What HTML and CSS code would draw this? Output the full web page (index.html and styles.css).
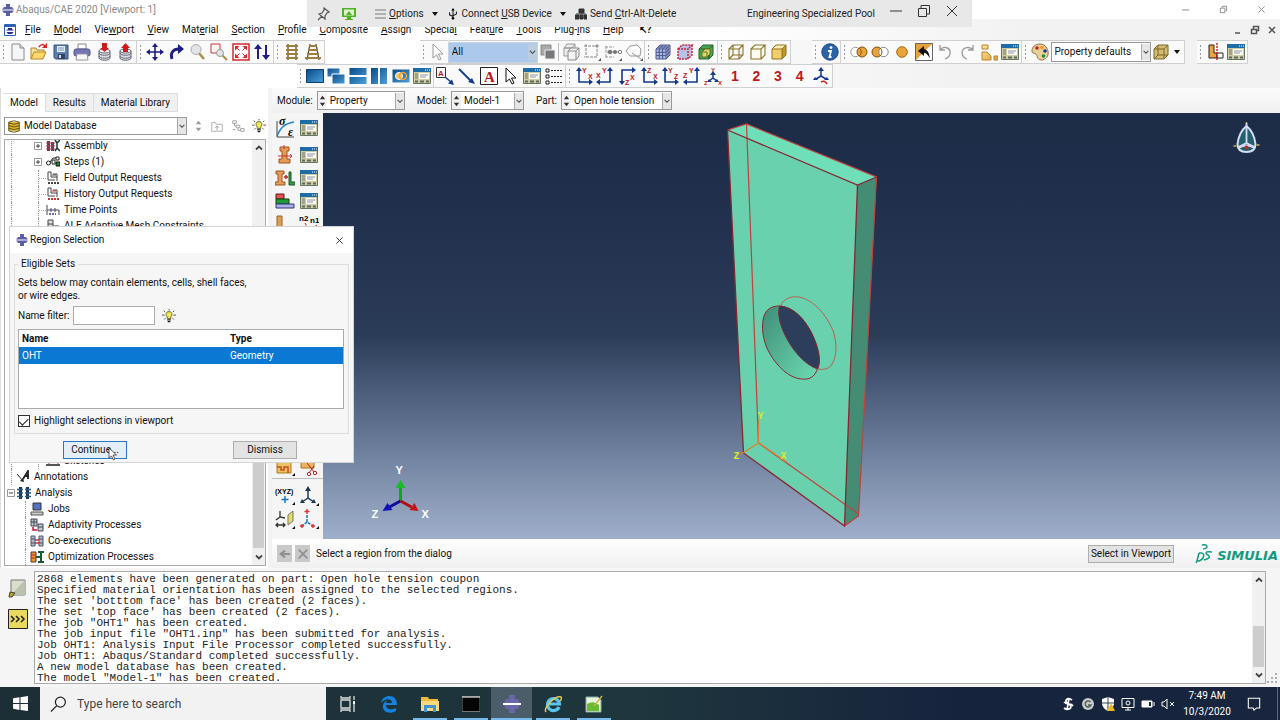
FILE: index.html
```html
<!DOCTYPE html>
<html lang="en">
<head>
<meta charset="utf-8">
<title>Abaqus/CAE 2020 [Viewport: 1]</title>
<link rel="stylesheet" href="styles.css">
</head>
<body>
<svg class="defs" aria-hidden="true">
  <defs>
    <linearGradient id="blueg" x1="0" y1="0" x2="1" y2="1"><stop offset="0" stop-color="#0b4a86"/><stop offset="1" stop-color="#4aa0dc"/></linearGradient>
    <linearGradient id="goldg" x1="0" y1="0" x2="1" y2="1"><stop offset="0" stop-color="#fde7a2"/><stop offset="1" stop-color="#dfa02c"/></linearGradient>
    <symbol id="app" viewBox="0 0 12 12"><path d="M4 0h4v3h2l2 2.400H0L2 3h2zM0 6.600h12L10 9H8v3H4V9H2z" fill="#5b5fa3"/></symbol>
    <symbol id="doc" viewBox="0 0 18 18"><path d="M3 1h8l4 4v12H3z" fill="#f6f6f8" stroke="#8a8a90"/><path d="M11 1v4h4" fill="#ddd" stroke="#8a8a90"/></symbol>
    <symbol id="open" viewBox="0 0 18 18"><path d="M1 16V5h5l1 2h7v3" fill="#f8e39c" stroke="#a9852d"/><path d="M1 16l3-7h12l-3 7z" fill="#ffd76a" stroke="#b98a24"/><path d="M9 4c2-3 4-3 6-1" fill="none" stroke="#d22" stroke-width="1.500"/><path d="M17 0v5h-5z" fill="#d22"/></symbol>
    <symbol id="save" viewBox="0 0 18 18"><path d="M2 2h14v14H3.500L2 14.500z" fill="#5c7fae" stroke="#33507c"/><path d="M5 3h8v6H5z" fill="#e8eef5"/><path d="M6 5h6M6 7h6" stroke="#7c95b8"/><path d="M6 11h7v5H6z" fill="#2e4360"/><path d="M7 12h2v3H7z" fill="#dde"/></symbol>
    <symbol id="print" viewBox="0 0 18 18"><path d="M5 1h8v5H5z" fill="#fff" stroke="#888"/><rect x="1" y="6" width="16" height="7" rx="2" fill="#7475b4" stroke="#55568f"/><path d="M4 11h10l1 6H3z" fill="#f8f8fb" stroke="#999"/></symbol>
    <symbol id="cyl" viewBox="0 0 18 18"><path d="M4 8v7c0 3 11 3 11 0V8z" fill="#d8dde0" stroke="#667"/><path d="M4 10c0 3 11 3 11 0M4 13c0 3 11 3 11 0" fill="none" stroke="#667"/><ellipse cx="9.500" cy="8" rx="5.500" ry="2" fill="#f3f5f6" stroke="#667"/></symbol>
    <symbol id="dbin" viewBox="0 0 18 18"><use href="#cyl"/><path d="M7 0h5v5h2l-4.500 4L5 5h2z" fill="#d3191d"/></symbol>
    <symbol id="dbout" viewBox="0 0 18 18"><use href="#cyl"/><path d="M7 9h5V5h2L9.500 0 5 5h2z" fill="#d3191d"/></symbol>
    <symbol id="move" viewBox="0 0 18 18"><path d="M9 2v14M2 9h14" stroke="#1d1d84" stroke-width="1.600"/><path d="M9 0l3 4H6zM9 18l3-4H6zM0 9l4-3v6zM18 9l-4-3v6z" fill="#1d1d84"/></symbol>
    <symbol id="rot" viewBox="0 0 18 18"><path d="M5 16C3 10 6 6 12 6" fill="none" stroke="#1d1d84" stroke-width="2.800"/><path d="M11 1l6 5-6 5z" fill="#1d1d84"/></symbol>
    <symbol id="mag" viewBox="0 0 18 18"><path d="M9 9l6 7" stroke="#aa8f45" stroke-width="2.500"/><circle cx="7" cy="6.500" r="5" fill="#e2e5e3" stroke="#aaa"/></symbol>
    <symbol id="magbox" viewBox="0 0 18 18"><path d="M1 1h9v9H1z" fill="#fff5f5" stroke="#c8393a"/><path d="M11 11l6 6" stroke="#aa8f45" stroke-width="2"/><circle cx="10" cy="10" r="3.500" fill="#e2e5e3" stroke="#999"/></symbol>
    <symbol id="fit" viewBox="0 0 18 18"><path d="M1 1h16v16H1z" fill="#fff" stroke="#d32b2b" stroke-width="1.500"/><path d="M3 3h4.500L3 7.500zM15 3v4.500L10.500 3zM3 15v-4.500L7.500 15zM15 15h-4.500l4.500-4.500z" fill="#d32b2b"/><path d="M4 4l3.500 3.500M14 4l-3.500 3.500M4 14l3.500-3.500M14 14l-3.500-3.500" stroke="#d32b2b"/></symbol>
    <symbol id="updn" viewBox="0 0 18 18"><path d="M5 4v12M13 2v12" stroke="#1d1d84" stroke-width="2"/><path d="M5 1l4 5H1zM13 17l4-5H9z" fill="#1d1d84"/></symbol>
    <symbol id="track" viewBox="0 0 18 18"><path d="M5 1v16M13 1v16" stroke="#5b4a2a" stroke-width="1.300"/><path d="M3 3h12M3 7h12M3 11h12M3 15h12" stroke="#9c7f3e" stroke-width="2"/></symbol>
    <symbol id="persp" viewBox="0 0 18 18"><path d="M6 1L3 17M12 1l3 16" stroke="#5b4a2a" stroke-width="1.300"/><path d="M5 3h8M4 7h10M3 11h12M1 15h16" stroke="#9c7f3e" stroke-width="2"/></symbol>
    <symbol id="arrow" viewBox="0 0 18 18"><path d="M5 1v14l3.500-3 2.500 5 2-1-2.500-5H15z" fill="#fff" stroke="currentColor"/></symbol>
    <symbol id="sqs" viewBox="0 0 18 18"><path d="M2 2h10v10H2z" fill="#aaa" stroke="#888"/><path d="M6 7h10v9H6z" fill="#77777c" stroke="#eee"/></symbol>
    <symbol id="wire" viewBox="0 0 18 18"><path d="M2 6h10v10H2zM2 6l4-4h10l-4 4M16 2v10l-4 4M6 2v10h10M2 16l4-4" fill="none" stroke="currentColor" stroke-width="1.100"/></symbol>
    <symbol id="wiredim" viewBox="0 0 18 18"><path d="M1 5l3-4h8l-3 4zM1 5h8v8H1zM12 1v8l-3 4" fill="#eee" stroke="#999"/><path d="M5 8l3-3h8v8l-3 4H5zM5 8h8v9M13 8l3-3" fill="#f3f3f3" stroke="#888"/></symbol>
    <symbol id="hid" viewBox="0 0 18 18"><path d="M2 6h10v10H2zM2 6l4-4h10l-4 4M16 2v10l-4 4" fill="#fffdf2" stroke="currentColor" stroke-width="1.100"/></symbol>
    <symbol id="solid" viewBox="0 0 18 18"><path d="M2 6h10v10H2z" fill="#f1cf68"/><path d="M2 6l4-4h10l-4 4z" fill="#ffeeb0"/><path d="M16 2v10l-4 4V6z" fill="#c3962d"/><path d="M2 6h10v10H2zM2 6l4-4h10l-4 4M16 2v10l-4 4" fill="none" stroke="#8d7327"/></symbol>
    <symbol id="mesh" viewBox="0 0 18 18"><path d="M2 6l4-4h10v10l-4 4H2z" fill="#aebbe2"/><path d="M2 6h10v10H2zM2 6l4-4h10l-4 4M16 2v10l-4 4M5.300 6v10M8.600 6v10M2 9.300h10l4-4M2 12.600h10l4-4M5.300 6l4-4M8.600 6l4-4M4 4h10v10" fill="none" stroke="#4b578b"/></symbol>
    <symbol id="seed" viewBox="0 0 18 18"><path d="M2 6l4-4h10v10l-4 4H2z" fill="#b9c0e6"/><path d="M2 6h10v10H2zM2 6l4-4h10l-4 4M16 2v10l-4 4" fill="none" stroke="#cf2539" stroke-width="1.500" stroke-dasharray="2 1"/></symbol>
    <symbol id="green" viewBox="0 0 18 18"><path d="M2 6h10v10H2zM2 6l4-4h10l-4 4M16 2v10l-4 4V6" fill="#4aa352" stroke="#26652b"/><path d="M5 9h5v5H5zM5 9l3-3h5v5l-3 3" fill="#d5da6a" stroke="#6b6f21"/></symbol>
    <symbol id="dashbox" viewBox="0 0 18 18"><path d="M3 1v13M1 3h13v11H1" fill="none" stroke="#888" stroke-dasharray="3 1"/><path d="M14 1v3M12 3h4" stroke="#888"/><path d="M15 18h3v-3z" fill="#555"/></symbol>
    <symbol id="nodes" viewBox="0 0 18 18"><path d="M2 3v12M1 4h9M1 14h9" stroke="#999" stroke-dasharray="3 1"/><path d="M3 9h14" stroke="#888"/><circle cx="6" cy="9" r="2.200" fill="#777"/><circle cx="11" cy="9" r="2" fill="#777"/><circle cx="16" cy="9" r="1.700" fill="#fff" stroke="#777"/><path d="M15 18h3v-3z" fill="#555"/></symbol>
    <symbol id="poly" viewBox="0 0 18 18"><path d="M1 8l4-5 7-1 4 4-1 7H5z" fill="none" stroke="#999"/><path d="M7 10l9 6" stroke="#999"/><path d="M15 18h3v-3z" fill="#555"/></symbol>
    <symbol id="info" viewBox="0 0 18 18"><circle cx="9" cy="9" r="8.200" fill="#2c62a6" stroke="#1b4780"/><circle cx="10" cy="4.600" r="1.400" fill="#fff"/><path d="M7 8h3l-1.500 6h2" fill="none" stroke="#fff" stroke-width="1.800"/></symbol>
    <symbol id="ovr" viewBox="0 0 18 18"><circle cx="5.500" cy="9" r="4.700" fill="#fff" stroke="#999"/><circle cx="12" cy="9" r="5" fill="#e8a33b" stroke="#80520c"/><path d="M9 5a4.700 4.700 0 0 1 0 8" fill="none" stroke="#80520c"/></symbol>
    <symbol id="ovl" viewBox="0 0 18 18"><circle cx="6" cy="9" r="5" fill="#e8a33b" stroke="#80520c"/><circle cx="12.500" cy="9" r="4.700" fill="#fff" stroke="#888"/><path d="M9 5a5 5 0 0 1 0 8" fill="none" stroke="#80520c"/></symbol>
    <symbol id="disc" viewBox="0 0 18 18"><circle cx="9" cy="9" r="5.300" fill="#e9a43c" stroke="#a36a11"/></symbol>
    <symbol id="hammer" viewBox="0 0 18 18"><path d="M0 0h18v18H0z" fill="#fff"/><path d="M0 0h18L0 18z" fill="#e5a13c"/><path d="M.5.500h17v17H.5z" fill="none" stroke="#666"/><path d="M3 8l6-5v3c4 1 5 4 6 9-3-4-4-5-6-5v3z" fill="#111"/></symbol>
    <symbol id="undo" viewBox="0 0 18 18"><path d="M4 2v5h5M4 7c3-4 9-3 10 1 1 4-2 7-5 8" fill="none" stroke="#9a9a9a" stroke-width="1.300"/></symbol>
    <symbol id="redo" viewBox="0 0 18 18"><path d="M15 2v5h-5M15 7C12 3 5 4 4 9c0 4 2 6 5 7" fill="none" stroke="#9a9a9a" stroke-width="1.300"/></symbol>
    <symbol id="assoc" viewBox="0 0 18 18"><path d="M2 2h6v4H2zM2 9h5l4 4v4H2zM14 13h4v4h-4z" fill="url(#goldg)" stroke="#b78432"/></symbol>
    <symbol id="form" viewBox="0 0 18 18"><path d="M.5 1.500h17v15H.5z" fill="#cfcda6" stroke="#66775f"/><path d="M0 1h18v4H0z" fill="#1d6ba7"/><path d="M12 3h1M14 3h1M16 3h1" stroke="#fff"/><path d="M6 6h10v6H6z" fill="#fdfdf5"/><path d="M7 8h8M7 10h6" stroke="#8b93a8"/><path d="M2 7h3M2 9h3M2 11h3" stroke="#777"/><path d="M2 14.500h3M7 14.500h4M13 14.500h3" stroke="#5f695a" stroke-width="2"/></symbol>
    <symbol id="palette" viewBox="0 0 18 18"><path d="M9 1C4 1 1 4 1 8c0 3 3 2 4 3 2 2 0 5 5 6 5 0 8-4 7-9-1-4-4-7-8-7z" fill="#e9cf98" stroke="#8d7142"/><circle cx="6" cy="5" r="1.800" fill="#c22"/><circle cx="11" cy="4.500" r="1.800" fill="#f29b2a"/><circle cx="14" cy="8" r="1.800" fill="#123a8e"/><circle cx="12.500" cy="13" r="1.800" fill="#1b8b35"/></symbol>
    <symbol id="cubeb" viewBox="0 0 18 18"><path d="M2 6l4-4h10v10l-4 4H2z" fill="#d2bb72"/><path d="M2 6h10v10H2zM2 6l4-4h10l-4 4M16 2v10l-4 4M6 2v10h10M2 16l4-4" fill="none" stroke="#7c6728"/></symbol>
    <symbol id="cut" viewBox="0 0 18 18"><path d="M3 2h5v8h3v5H3z" fill="#e7a63d" stroke="#222"/><path d="M11 10h6v5h-6z" fill="#fff" stroke="#222"/><path d="M11 0v18" stroke="#d22" stroke-width="1.500" stroke-dasharray="2 1"/></symbol>
    <symbol id="w1" viewBox="0 0 18 18"><path d="M.5 2.500h17v13H.5z" fill="url(#blueg)" stroke="#0c3f70"/></symbol>
    <symbol id="w2" viewBox="0 0 18 18"><path d="M0 1h13v9H0z" fill="url(#blueg)" stroke="#fff"/><path d="M5 7h13v10H5z" fill="url(#blueg)" stroke="#fff"/></symbol>
    <symbol id="w3" viewBox="0 0 18 18"><path d="M.5 1h17v7H.5zM.5 10h17v7H.5z" fill="url(#blueg)"/></symbol>
    <symbol id="w4" viewBox="0 0 18 18"><path d="M1 1h7v16H1zM10 1h7v16h-7z" fill="url(#blueg)"/></symbol>
    <symbol id="w5" viewBox="0 0 18 18"><path d="M.5 2.500h17v13H.5z" fill="url(#blueg)"/><circle cx="7" cy="9" r="3.500" fill="#f2c36a" stroke="#fff"/><circle cx="11" cy="9" r="3.500" fill="none" stroke="#f3a32b" stroke-width="1.500"/></symbol>
    <symbol id="acall" viewBox="0 0 18 18"><path d="M.5.500h9v10h-9z" fill="#fff" stroke="#333"/><text x="2" y="9" class="t8 red">A</text><path d="M9 10l6 5" stroke="#103a93" stroke-width="1.500"/><path d="M18 18l-6-1.500 4-4z" fill="#103a93"/></symbol>
    <symbol id="line" viewBox="0 0 18 18"><path d="M1 2l12 12" stroke="#103a93" stroke-width="1.800"/><path d="M17 17l-7-2 4-4z" fill="#103a93"/></symbol>
    <symbol id="abox" viewBox="0 0 18 18"><path d="M.5.500h17v17H.5z" fill="#fff" stroke="#222"/><text x="4" y="15" class="t15 red">A</text></symbol>
    <symbol id="list" viewBox="0 0 18 18"><path d="M1 2h3v3H1zM1 8h3v3H1zM1 14h3v3H1z" fill="none" stroke="#222"/><path d="M6 3.500h12M6 9.500h12M6 15.500h12" stroke="#222" stroke-dasharray="2 1"/></symbol>
    <symbol id="axr" viewBox="0 0 18 18"><path d="M4 3v12h11" fill="none" stroke="#12398f" stroke-width="1.600"/><path d="M4 0l3 4H1zM18 15l-4-3v6z" fill="#12398f"/></symbol>
    <symbol id="axl" viewBox="0 0 18 18"><path d="M14 3v12H3" fill="none" stroke="#12398f" stroke-width="1.600"/><path d="M14 0l3 4h-6zM0 15l4-3v6z" fill="#12398f"/></symbol>
    <symbol id="axd" viewBox="0 0 18 18"><path d="M4 14V3h11" fill="none" stroke="#12398f" stroke-width="1.600"/><path d="M4 18l3-4H1zM18 3l-4-3v6z" fill="#12398f"/></symbol>
    <symbol id="xy" viewBox="0 0 18 18"><use href="#axr"/><text x="7" y="6" class="t7 red">Y</text><text x="13" y="12" class="t7 red">X</text></symbol>
    <symbol id="yx" viewBox="0 0 18 18"><use href="#axl"/><text x="6" y="6" class="t7 red">Y</text><text x="0" y="11" class="t7 red">X</text></symbol>
    <symbol id="xz" viewBox="0 0 18 18"><use href="#axd"/><text x="12" y="13" class="t7 red">X</text><text x="7" y="18" class="t7 red">Z</text></symbol>
    <symbol id="zx" viewBox="0 0 18 18"><use href="#axr"/><text x="7" y="6" class="t7 red">Z</text><text x="13" y="12" class="t7 red">X</text></symbol>
    <symbol id="yz" viewBox="0 0 18 18"><use href="#axr"/><text x="7" y="6" class="t7 red">Y</text><text x="13" y="12" class="t7 red">Z</text></symbol>
    <symbol id="zy" viewBox="0 0 18 18"><use href="#axl"/><text x="6" y="6" class="t7 red">Y</text><text x="0" y="11" class="t7 red">Z</text></symbol>
    <symbol id="tri" viewBox="0 0 18 18"><path d="M9 6v5l4 3M9 11l-4 3" fill="none" stroke="#12398f" stroke-width="1.500"/><path d="M9 4l3 4H6zM15 15l-5 0 3-3zM3 15h5l-3-3z" fill="#12398f"/></symbol>
    <symbol id="iso" viewBox="0 0 18 18"><use href="#tri"/><text x="7" y="5" class="t6 red">Y</text><text x="14" y="18" class="t6 red">X</text><text x="0" y="18" class="t6 red">Z</text></symbol>
    <symbol id="csys" viewBox="0 0 18 18"><path d="M9 3v6l5 3M9 9l-5 3" fill="none" stroke="#12398f" stroke-width="1.500"/><path d="M9 0l3 4H6zM17 13l-5 0 3-3zM1 13h5l-3-3z" fill="#12398f"/><path d="M9 15q4-2 6 2" fill="none" stroke="#c22" stroke-width="1.500"/></symbol>
    <symbol id="chev" viewBox="0 0 10 10"><path d="M2 3.500l3 3 3-3" fill="none" stroke="#555" stroke-width="1.300"/></symbol>
    <symbol id="chevup" viewBox="0 0 10 10"><path d="M2 6.500l3-3 3 3" fill="none" stroke="#444" stroke-width="1.800"/></symbol>
    <symbol id="spin" viewBox="0 0 10 18"><path d="M5 3l3 4H2zM5 15l3-4H2z" fill="currentColor"/></symbol>
    <symbol id="bulb" viewBox="0 0 16 16"><path d="M8 3c-4 0-4 4-2 6v2h4V9c2-2 2-6-2-6z" fill="#ece95a" stroke="#5b5a20"/><path d="M6 12.500h4M6.500 14.500h3" stroke="#222" stroke-width="1.500"/><path d="M8 0v1.500M2 2l1.500 1.500M14 2l-1.500 1.500M0 7h3M13 7h3M2.500 12L4 10.500M13.500 12L12 10.500" stroke="#444"/></symbol>
    <symbol id="dbase" viewBox="0 0 16 14"><path d="M2 2h12v10H2z" fill="#e0b928"/><path d="M2 2q6-3 12 0M2 3q6 3 12 0M2 6q6 3 12 0M2 9q6 3 12 0M2 12q6 3 12 0M2 2v10M14 2v10" fill="none" stroke="#51420b"/></symbol>
    <symbol id="up" viewBox="0 0 16 16"><path d="M2 4h4l1 2h7v8H2z" fill="none" stroke="#aaa"/><path d="M8 13V8M6 10l2-2 2 2" fill="none" stroke="#999"/></symbol>
    <symbol id="links" viewBox="0 0 16 16"><path d="M2 2h4v3H2zM6 7h4v3H6zM11 11h4v3h-4zM4 5v3h2M8 10v3h3M2 12h3" fill="none" stroke="#999"/></symbol>
    <symbol id="plus" viewBox="0 0 8 8"><path d="M.5.500h7v7h-7z" fill="#fff" stroke="#999"/><path d="M2 4h4M4 2v4" stroke="#444"/></symbol>
    <symbol id="minus" viewBox="0 0 8 8"><path d="M.5.500h7v7h-7z" fill="#fff" stroke="#999"/><path d="M2 4h4" stroke="#444"/></symbol>
    <symbol id="asm" viewBox="0 0 14 14"><path d="M1 2h3v10H1zM5 3h3v9H5z" fill="#554454"/><path d="M0 4h9M0 7h9M0 10h9" stroke="#b33a55"/><path d="M9 1l2 3 3-3M11 4v6M9 12l2-3 3 3" fill="none" stroke="#173f2d" stroke-width="1.500"/></symbol>
    <symbol id="step" viewBox="0 0 14 14"><circle cx="2.500" cy="8" r="2" fill="none" stroke="#222"/><path d="M4 7l3-4h3" fill="none" stroke="#222"/><path d="M6 5h3v4H6zM10 2h3v3h-3z" fill="#fff" stroke="#222"/><path d="M10 7h4v4h-4z" fill="#1c8a2d" stroke="#111"/></symbol>
    <symbol id="outp" viewBox="0 0 14 14"><path d="M2 1h3v5h6V3H7M2 1v8M2 9h7M11 6v4" fill="none" stroke="#444"/><path d="M2 12h12" stroke="currentColor" stroke-width="2" stroke-dasharray="2 1"/><path d="M6 4h4" stroke="currentColor"/></symbol>
    <symbol id="time" viewBox="0 0 14 14"><path d="M1 2v10M1 7h12M5 5v4M9 5v4M13 7v5" fill="none" stroke="#446"/><path d="M3 11h7" stroke="#66b" stroke-width="2" stroke-dasharray="2 1"/></symbol>
    <symbol id="ale" viewBox="0 0 14 14"><path d="M2 1h5v11H2zM2 5h5M2 9h5M7 7h6v5H7M10 7v5" fill="#ddd" stroke="#444"/></symbol>
    <symbol id="sk" viewBox="0 0 14 14"><path d="M3 3h9v8H3z" fill="#fff" stroke="#b33"/><path d="M0 11h14" stroke="#555" stroke-width="2"/></symbol>
    <symbol id="ann" viewBox="0 0 14 14"><path d="M1 4l6 7" stroke="#222"/><path d="M8 12l-4-1 3-3z" fill="#222"/><path d="M7 9l5-8v8M9 6h4" fill="none" stroke="#222" stroke-width="1.800"/></symbol>
    <symbol id="ana" viewBox="0 0 14 14"><path d="M2 1h3v12H2zM9 1h3v12H9z" fill="#1a3556"/><path d="M0 3.500h6M0 7h6M0 10.500h6M8 3.500h6M8 7h6M8 10.500h6" stroke="#2b5a80" stroke-width="1.500"/></symbol>
    <symbol id="job" viewBox="0 0 14 14"><path d="M3 1h8v7H3z" fill="#5173c4" stroke="#333"/><path d="M1 10h12v3H1z" fill="#ccc" stroke="#555"/></symbol>
    <symbol id="adp" viewBox="0 0 14 14"><path d="M1 1h6v7H1zM1 4h6M4 1v7M8 6h5v7H8zM8 9h5" fill="#bcc" stroke="#445"/><path d="M3 9v3h4" fill="none" stroke="#c13" stroke-width="1.500"/></symbol>
    <symbol id="coex" viewBox="0 0 14 14"><path d="M1 2h4v10H1zM9 2h4v10H9zM1 5h4M1 9h4M9 5h4M9 9h4" fill="#abc" stroke="#556"/><path d="M5 6h4M5 9h4" stroke="#c33" stroke-width="1.500"/></symbol>
    <symbol id="opt" viewBox="0 0 14 14"><path d="M1 2h5v10H1z" fill="#e29b2e" stroke="#634"/><path d="M1 5h5M1 8h5" stroke="#c22"/><path d="M8 2h6M8 12h6M11 2v10M6 7h5" stroke="#175c36" stroke-width="2"/></symbol>
    <symbol id="sig" viewBox="0 0 20 20"><path d="M2 3v16h17" fill="none" stroke="#444"/><path d="M2 18C6 9 9 6 19 4" fill="none" stroke="#2882c6" stroke-width="1.500"/><text x="4" y="7" class="t12">σ</text><text x="13" y="18" class="t12">ε</text></symbol>
    <symbol id="sec" viewBox="0 0 20 20"><path d="M5 2h9v4h-2v8h3v4H4v-4h3V6H5z" fill="#e49b57" stroke="#9c5420"/><path d="M3 11h14M15 9l2 2-2 2M9 0v4" fill="none" stroke="#c33"/></symbol>
    <symbol id="secl" viewBox="0 0 20 20"><path d="M1 3h8v3H7v8h3v3H0v-3h3V6H1z" fill="#e49b57" stroke="#9c5420"/><path d="M9 9h4M11 7v4" stroke="#c22" stroke-width="1.500"/><path d="M14 4h2v10h4v3h-6z" fill="#3d9a48" stroke="#1d5a25"/></symbol>
    <symbol id="lay" viewBox="0 0 20 20"><path d="M1 3h8v5H1z" fill="#e05555" stroke="#611"/><path d="M1 8h13v5H1z" fill="#1e9b34" stroke="#141"/><path d="M1 13h18v4H1z" fill="#aab0ea" stroke="#337"/></symbol>
    <symbol id="beam" viewBox="0 0 20 20"><path d="M2 2h5v17H2z" fill="#dca055" stroke="#96602b"/></symbol>
    <symbol id="nn" viewBox="0 0 20 20"><text x="0" y="7" class="t8">n2</text><text x="11" y="9" class="t8">n1</text><path d="M6 9l4 8 8-6" fill="none" stroke="#c22" stroke-dasharray="3 1"/></symbol>
    <symbol id="part1" viewBox="0 0 20 20"><path d="M2 4h14v12H2z" fill="#ecc45f" stroke="#a77a24"/><path d="M2 10h4v3h3v-3h4v6" fill="none" stroke="#c74b22" stroke-width="1.500"/><path d="M17 19h3v-3z"/></symbol>
    <symbol id="part2" viewBox="0 0 20 20"><path d="M2 4h13v7H2z" fill="#ecb35f" stroke="#a77a24"/><path d="M8 6l7 9M15 9l-5 7" stroke="#b22"/><circle cx="16" cy="16" r="1.700" fill="#fff" stroke="#b22"/><circle cx="10" cy="17" r="1.700" fill="#fff" stroke="#b22"/></symbol>
    <symbol id="xyz" viewBox="0 0 20 20"><text x="0" y="8" class="t7">(XYZ)</text><path d="M10 10v7M6.500 13.500h7" stroke="#1673c2" stroke-width="1.400"/><path d="M17 19h3v-3z"/></symbol>
    <symbol id="daxis" viewBox="0 0 20 20"><path d="M9 3v9l6 4M9 12l-6 4" fill="none" stroke="#1c3d52" stroke-width="1.500"/><path d="M9 0l3 5H6zM17 17l-5 0 3-4zM1 17h5l-3-4z" fill="#1c3d52"/><path d="M17 20h3v-3z"/></symbol>
    <symbol id="dpl" viewBox="0 0 20 20"><path d="M5 2v6l5 1M5 8l-4 3M1 16h9M3 14l-2 2 2 2M8 14l2 2-2 2" fill="none" stroke="#333" stroke-width="1.300"/><path d="M13 6l5-4v10l-5 4z" fill="#e8db6b" stroke="#776"/><path d="M17 20h3v-3z"/></symbol>
    <symbol id="dcs" viewBox="0 0 20 20"><path d="M8 6v7l6 4M8 13l-5 4" fill="none" stroke="#1673c2" stroke-width="1.500" stroke-dasharray="3 1"/><path d="M8 0v5M5.500 2.500h5M3 15v4M1 17h4M14 15v4M12 17h4" stroke="#d33" stroke-width="1.400"/><path d="M17 20h3v-3z"/></symbol>
  </defs>
</svg>

<div class="desktop">
  <header class="title">
    <svg class="s12"><use href="#app"/></svg><span class="title-text">Abaqus/CAE 2020 [Viewport: 1]</span>
    <div class="winbtns">
      <button aria-label="Minimize"><svg viewBox="0 0 10 10"><path d="M1 5.500h8"/></svg></button>
      <button aria-label="Restore"><svg viewBox="0 0 10 10"><path d="M1.500 3.500h5v5h-5zM3.500 3V1.500h5v5H7"/></svg></button>
      <button aria-label="Close"><svg viewBox="0 0 10 10"><path d="M1.500 1.500l7 7M8.500 1.500l-7 7"/></svg></button>
    </div>
  </header>

  <nav class="menu">
    <svg class="s12 menulogo" viewBox="0 0 12 12"><path d="M.5.500h11v11H.5z" fill="#fff" stroke="#2b62b5"/><path d="M1 1h10v2H1z" fill="#2b62b5"/><path d="M4 4h4v1.500h1.500v1h-7v-1H4zM2.500 8h7L8 10H4z" fill="#2a2c8c"/></svg>
    <button><u>F</u>ile</button><button><u>M</u>odel</button><button>Vie<u>w</u>port</button><button><u>V</u>iew</button><button>Mat<u>e</u>rial</button><button><u>S</u>ection</button><button><u>P</u>rofile</button><button><u>C</u>omposite</button><button><u>A</u>ssign</button><button>Specia<u>l</u></button><button>Feat<u>u</u>re</button><button><u>T</u>ools</button><button>Plug-<u>i</u>ns</button><button><u>H</u>elp</button><button class="ctxhelp" aria-label="Context help">↖?</button>
    <div class="mdibtns">
      <button aria-label="Minimize viewport"><svg viewBox="0 0 10 10"><path d="M2 8h5"/></svg></button>
      <button aria-label="Restore viewport"><svg viewBox="0 0 10 10"><path d="M1.500 4.500h5v4h-5zM3.500 4V1.500h5v4H7"/></svg></button>
      <button aria-label="Close viewport"><svg viewBox="0 0 10 10"><path d="M2 2l6 6M8 2l-6 6"/></svg></button>
    </div>
  </nav>

  <div class="bar">
    <div class="grp g137"><i class="grip"></i><button aria-label="New"><svg><use href="#doc"/></svg></button><button aria-label="Open"><svg><use href="#open"/></svg></button><button aria-label="Save"><svg><use href="#save"/></svg></button><button aria-label="Print"><svg><use href="#print"/></svg></button><button aria-label="Check in"><svg><use href="#dbin"/></svg></button><button aria-label="Check out"><svg><use href="#dbout"/></svg></button></div>
    <div class="grp g137"><i class="grip"></i><button aria-label="Pan"><svg><use href="#move"/></svg></button><button aria-label="Rotate"><svg><use href="#rot"/></svg></button><button aria-label="Magnify"><svg><use href="#mag"/></svg></button><button aria-label="Box zoom"><svg><use href="#magbox"/></svg></button><button aria-label="Fit view"><svg><use href="#fit"/></svg></button><button aria-label="Cycle views"><svg><use href="#updn"/></svg></button></div>
    <div class="grp g51"><i class="grip"></i><button aria-label="Parallel"><svg><use href="#track"/></svg></button><button aria-label="Perspective"><svg><use href="#persp"/></svg></button></div>
    <div class="grp far-a"><i class="grip"></i><button class="dim" aria-label="Select"><svg><use href="#arrow"/></svg></button><span class="combo all"><select aria-label="Selection filter"><option>All</option></select><svg class="drop"><use href="#chev"/></svg></span><button aria-label="Inside"><svg><use href="#sqs"/></svg></button><i class="sep"></i><button aria-label="Exterior"><svg><use href="#wiredim"/></svg></button><button aria-label="Drag shape"><svg><use href="#dashbox"/></svg></button><button aria-label="Nodes"><svg><use href="#nodes"/></svg></button><button aria-label="Polygon"><svg><use href="#poly"/></svg></button></div>
    <div class="grp g73"><i class="grip"></i><button aria-label="Mesh"><svg><use href="#mesh"/></svg></button><button aria-label="Seeds"><svg><use href="#seed"/></svg></button><button aria-label="Reference"><svg><use href="#green"/></svg></button></div>
    <div class="grp g73"><i class="grip"></i><button class="gold" aria-label="Wireframe"><svg><use href="#wire"/></svg></button><button class="gold" aria-label="Hidden"><svg><use href="#hid"/></svg></button><button aria-label="Shaded"><svg><use href="#solid"/></svg></button></div>
    <div class="grp far-b"><i class="grip"></i><button aria-label="Query"><svg><use href="#info"/></svg></button></div>
    <div class="grp g181"><i class="grip"></i><button aria-label="Replace"><svg><use href="#ovr"/></svg></button><button aria-label="Remove"><svg><use href="#ovl"/></svg></button><button aria-label="Display all"><svg><use href="#disc"/></svg></button><button aria-label="Active"><svg><use href="#hammer"/></svg></button><button aria-label="Undo"><svg><use href="#undo"/></svg></button><button aria-label="Redo"><svg><use href="#redo"/></svg></button><button aria-label="Groups"><svg><use href="#assoc"/></svg></button><button aria-label="Group manager"><svg><use href="#form"/></svg></button></div>
    <div class="grp g163"><i class="grip"></i><button aria-label="Colors"><svg><use href="#palette"/></svg></button><span class="combo defaults"><select aria-label="Color mapping"><option>Property defaults</option></select><svg class="drop"><use href="#chev"/></svg></span><button aria-label="Translucency"><svg><use href="#cubeb"/></svg></button><i class="tri"></i></div>
    <div class="grp far-c"><i class="grip"></i><button aria-label="View cut"><svg><use href="#cut"/></svg></button><button aria-label="View cut manager"><svg><use href="#form"/></svg></button></div>
  </div>

  <div class="bar second">
    <div class="grp g137"><i class="grip"></i><button aria-label="New viewport"><svg><use href="#w1"/></svg></button><button aria-label="Cascade"><svg><use href="#w2"/></svg></button><button aria-label="Tile rows"><svg><use href="#w3"/></svg></button><button aria-label="Tile columns"><svg><use href="#w4"/></svg></button><button aria-label="Link"><svg><use href="#w5"/></svg></button><button aria-label="Link options"><svg><use href="#form"/></svg></button></div>
    <div class="grp g132"><button aria-label="Callout"><svg><use href="#acall"/></svg></button><button aria-label="Arrow"><svg><use href="#line"/></svg></button><button aria-label="Text"><svg><use href="#abox"/></svg></button><button aria-label="Edit"><svg><use href="#arrow"/></svg></button><button aria-label="Manager"><svg><use href="#form"/></svg></button><button aria-label="Legend"><svg><use href="#list"/></svg></button></div>
    <div class="grp g267"><i class="grip"></i><button aria-label="XY"><svg><use href="#xy"/></svg></button><button aria-label="YX"><svg><use href="#yx"/></svg></button><button aria-label="XZ"><svg><use href="#xz"/></svg></button><button aria-label="ZX"><svg><use href="#zx"/></svg></button><button aria-label="YZ"><svg><use href="#yz"/></svg></button><button aria-label="ZY"><svg><use href="#zy"/></svg></button><button aria-label="Isometric"><svg><use href="#iso"/></svg></button><button class="num">1</button><button class="num">2</button><button class="num">3</button><button class="num">4</button><button aria-label="Specify"><svg><use href="#csys"/></svg></button></div>
  </div>

  <main class="work">
    <aside class="side">
      <div class="tabs"><button class="on">Model</button><button>Results</button><button>Material Library</button></div>
      <div class="dbrow">
        <span class="combo db"><svg class="dbi"><use href="#dbase"/></svg><select aria-label="Database"><option>Model Database</option></select><svg class="drop"><use href="#chev"/></svg></span>
        <svg class="spn grey"><use href="#spin"/></svg><svg class="s16"><use href="#up"/></svg><svg class="s16"><use href="#links"/></svg><svg class="s16"><use href="#bulb"/></svg>
      </div>
      <div class="treebox">
        <div class="tree">
          <ul class="upper">
            <li><i class="v a"></i><svg class="ex"><use href="#plus"/></svg><svg class="ti"><use href="#asm"/></svg>Assembly</li>
            <li><i class="v a"></i><svg class="ex"><use href="#plus"/></svg><svg class="ti"><use href="#step"/></svg>Steps (1)</li>
            <li><i class="v a"></i><i class="tee"></i><svg class="ti blk"><use href="#outp"/></svg>Field Output Requests</li>
            <li><i class="v a"></i><i class="tee"></i><svg class="ti redi"><use href="#outp"/></svg>History Output Requests</li>
            <li><i class="v a"></i><i class="tee"></i><svg class="ti"><use href="#time"/></svg>Time Points</li>
            <li><i class="v a"></i><i class="tee"></i><svg class="ti"><use href="#ale"/></svg>ALE Adaptive Mesh Constraints</li>
          </ul>
          <ul>
            <li><i class="v a"></i><i class="tee"></i><svg class="ti"><use href="#sk"/></svg>Sketches</li>
            <li><i class="v c"></i><svg class="ti"><use href="#ann"/></svg>Annotations</li>
            <li><svg class="ex r"><use href="#minus"/></svg><svg class="ti"><use href="#ana"/></svg>Analysis</li>
            <li><i class="v b"></i><svg class="ti"><use href="#job"/></svg>Jobs</li>
            <li><i class="v b"></i><svg class="ti"><use href="#adp"/></svg>Adaptivity Processes</li>
            <li><i class="v b"></i><svg class="ti"><use href="#coex"/></svg>Co-executions</li>
            <li><i class="v b"></i><svg class="ti"><use href="#opt"/></svg>Optimization Processes</li>
          </ul>
        </div>
        <div class="scroll"><svg><use href="#chevup"/></svg><i class="thumb"></i><svg class="flip"><use href="#chevup"/></svg></div>
      </div>
    </aside>

    <section class="right">
      <div class="context">
        <label for="module">Module:</label><span class="combo m1"><svg class="spn"><use href="#spin"/></svg><select id="module"><option>Property</option></select><svg class="drop"><use href="#chev"/></svg></span>
        <label for="modelsel">Model:</label><span class="combo m2"><svg class="spn"><use href="#spin"/></svg><select id="modelsel"><option>Model-1</option></select><svg class="drop"><use href="#chev"/></svg></span>
        <label for="partsel">Part:</label><span class="combo m3"><svg class="spn"><use href="#spin"/></svg><select id="partsel"><option>Open hole tension</option></select><svg class="drop"><use href="#chev"/></svg></span>
      </div>
      <div class="canvasrow">
        <div class="toolbox">
          <div class="tools top"><svg><use href="#sig"/></svg><svg class="f"><use href="#form"/></svg><svg><use href="#sec"/></svg><svg class="f"><use href="#form"/></svg><svg><use href="#secl"/></svg><svg class="f"><use href="#form"/></svg><svg><use href="#lay"/></svg><svg class="f"><use href="#form"/></svg><svg><use href="#beam"/></svg><svg><use href="#nn"/></svg></div>
          <div>
            <div class="tools low"><svg><use href="#part1"/></svg><svg><use href="#part2"/></svg></div>
            <div class="tools datum"><svg><use href="#xyz"/></svg><svg><use href="#daxis"/></svg><svg><use href="#dpl"/></svg><svg><use href="#dcs"/></svg></div>
          </div>
        </div>
        <div class="viewport">
          <svg viewBox="323 113 956 426" role="img" aria-label="Open hole tension part">
            <defs><linearGradient id="hole" x1="0" y1="0" x2="1" y2="1"><stop offset="0" stop-color="#3f8d76"/><stop offset="1" stop-color="#6ddcb4"/></linearGradient></defs>
            <path d="M727 130L746 124 876 177 858 516 844 526 743 453z" fill="#6ad1ae"/>
            <path d="M727 130L746 124 876 177 857 185z" fill="#6edfb8"/>
            <path d="M857 185L876 177 858 516 844 526z" fill="#458c75"/>
            <path d="M763 318C765 309 771 306 779 306C793 307 804 319 811 333C818 347 821 361 817 369C814 377 809 380 801 379C787 378 773 363 766 347C762 336 761 327 763 318z" fill="url(#hole)" stroke="#8c2432"/>
            <path d="M779 306C793 307 804 319 811 333C818 347 821 361 817 369C803 364 791 349 784 334C779 323 777 314 779 306z" fill="#2c3e5c" stroke="#7c2836"/>
            <path d="M780 306C783 299 789 296 798 297C812 299 826 314 833 332C837 346 836 357 831 365C828 369 823 370 817 369" fill="none" stroke="#b8604f"/>
            <path d="M746 124L758 443 858 514M727 130L746 124 876 177 858 516 844 526" fill="none" stroke="#c33f3d" stroke-width="1.200"/>
            <path d="M727 130L857 185 876 177M857 185L844 526 743 453 727 130" fill="none" stroke="#8a2433" stroke-width="1.300"/>
            <path d="M758 419v24M758 443l-19 12M758 443l28 19" fill="none" stroke="#e27b29" stroke-width="1.200"/>
            <g class="datumtxt"><text x="757" y="419">Y</text><text x="733" y="459">Z</text><text x="780" y="459">X</text></g>
            <path d="M400 501V484" stroke="#11a621" stroke-width="3"/><path d="M400 480l5 8h-10z" fill="#18bb28"/>
            <path d="M400 501l-11 6" stroke="#0c0c9c" stroke-width="3"/><path d="M382 511l5-8 5 7z" fill="#1212b4"/>
            <path d="M400 501l11 6" stroke="#b01010" stroke-width="3"/><path d="M418 511l-9-1 5-7z" fill="#c41414"/>
            <g class="triadtxt"><text x="395" y="474">Y</text><text x="371" y="518">Z</text><text x="421" y="518">X</text></g>
            <path d="M1246 126c-5 4-8 10-9 18q0 8 9 8t9-8c-1-8-4-14-9-18z" fill="#23606d" stroke="#d7dcf5" stroke-width="2"/><path d="M1246 123v20l-8 4M1246 143l8 4M1238 148q8-5 16 0" fill="none" stroke="#d7dcf5" stroke-width="1.800"/><circle cx="1246" cy="147.500" r="2" fill="#c22"/><path d="M1233 146h3M1256 145h3M1246 122v1" stroke="#c5b945" stroke-width="1.500"/>
          </svg>
        </div>
      </div>
      <div class="prompt">
        <button class="pbtn" aria-label="Back"><svg viewBox="0 0 14 14"><path d="M13 7H4M7 3L2 7l5 4" stroke-width="2.500"/></svg></button><button class="pbtn" aria-label="Cancel"><svg viewBox="0 0 14 14"><path d="M2 2l10 10M12 2L2 12" stroke-width="2"/></svg></button>
        <span>Select a region from the dialog</span>
        <button class="btn selvp">Select in Viewport</button>
        <svg class="ds" viewBox="0 0 18 20" aria-hidden="true"><path d="M7 1q5-1 5 2-1 2-4 2M4 9h2q4 0 2 5-2 3-6 3l2-8M1 19l1-2M17 8q-6-1-6 1 0 1 2 2 4 3-4 5" fill="none" stroke="#149a82" stroke-width="1.500"/></svg>
        <span class="simulia">SIMULIA</span>
      </div>
    </section>
  </main>

  <section class="messages">
    <div class="mtabs"><button aria-label="Message area"><svg viewBox="0 0 20 20"><path d="M3 1h14v15H3z" fill="#d9dfcb" stroke="#777"/><path d="M3 16L17 1v15z" fill="#b9c2ad"/><path d="M1 18l1-5 5 1-3 4z" fill="#b5a32b" stroke="#443"/></svg></button><button class="pressed" aria-label="Command line"><svg viewBox="0 0 20 20"><path d="M.5.500h19v19H.5z" fill="#e9d95e" stroke="#222"/><path d="M3 7l3 3-3 3M8 7l3 3-3 3M13 7l3 3-3 3" fill="none" stroke="#222" stroke-width="1.500"/></svg></button></div>
    <div class="log">
      <pre>2868 elements have been generated on part: Open hole tension coupon
Specified material orientation has been assigned to the selected regions.
The set 'botttom face' has been created (2 faces).
The set 'top face' has been created (2 faces).
The job "OHT1" has been created.
The job input file "OHT1.inp" has been submitted for analysis.
Job OHT1: Analysis Input File Processor completed successfully.
Job OHT1: Abaqus/Standard completed successfully.
A new model database has been created.
The model "Model-1" has been created.</pre>
      <div class="scroll"><svg><use href="#chevup"/></svg><i class="thumb small"></i><svg class="flip"><use href="#chevup"/></svg></div>
    </div>
    <svg class="resize" viewBox="0 0 12 12"><path d="M8 2h2M4 6h2M8 6h2M0 10h2M4 10h2M8 10h2" stroke="#999" stroke-width="1.500"/></svg>
  </section>

  <footer class="taskbar">
    <button class="start" aria-label="Start"><svg viewBox="0 0 16 16"><path d="M1 3l6-1v5.500H1zM8 2l7-1v6.500H8zM1 8.500h6V14l-6-1zM8 8.500h7V15l-7-1z" fill="#fff"/></svg></button>
    <label class="search"><svg viewBox="0 0 18 18"><circle cx="11" cy="7" r="5.300"/><path d="M7 11l-6 6"/></svg><input type="text" placeholder="Type here to search" aria-label="Search"></label>
    <div class="apps">
      <button aria-label="Task View"><svg viewBox="0 0 18 18"><path d="M2 5h9v8H2zM2 1v2h9V1M2 17v-2h9v2M15 1v4M15 9v8" fill="none" stroke="#ddd" stroke-width="1.300"/><path d="M14 6h2v3h-2z" fill="#fff"/></svg></button>
      <button aria-label="Edge"><svg viewBox="0 0 18 18"><path d="M1 8C2 3 6 1 9 1c5 0 8 3 8 9H6c0 5 6 5 10 3v3C9 20 2 17 3 10c1-3 3-4 5-5-2 1-2 3-2 3h6C12 3 5 3 1 8z" fill="#1583dc"/></svg></button>
      <button class="run" aria-label="File Explorer"><svg viewBox="0 0 18 18"><path d="M0 2h7l1 2h9v12H0z" fill="#f0b93a"/><path d="M0 6h18v10H0z" fill="#fbd97a"/><path d="M3 10h12v7h-3v-4H6v4H3z" fill="#3f94d2"/></svg></button>
      <button class="run" aria-label="Command Prompt"><svg viewBox="0 0 18 18"><path d="M0 1.500h18v15H0z" fill="#050505" stroke="#777"/><path d="M0 2h18" stroke="#bbb" stroke-width="1.500"/></svg></button>
      <button class="run active" aria-label="Abaqus"><svg viewBox="0 0 18 18"><path d="M6 0h6v4h3l2 4H1l2-4h3zM1 10h16l-2 4h-3v4H6v-4H3z" fill="#6a66aa"/><path d="M0 9h18" stroke="#fff" stroke-width="2"/></svg></button>
      <button class="run" aria-label="Internet Explorer"><svg viewBox="0 0 18 18"><path d="M15 12a6 6 0 1 1 .5-3H5" fill="none" stroke="#59c4ee" stroke-width="3.200"/><path d="M2 17C-1 13 11 0 17 2c1 1 0 3-1 4" fill="none" stroke="#e9c94b" stroke-width="1.500"/></svg></button>
      <button class="run" aria-label="Notepad++"><svg viewBox="0 0 18 18"><path d="M1 2h12l3 3v12H1z" fill="#e9f4dc" stroke="#8a9"/><path d="M2 9q6-4 12 1v6H2z" fill="#67bb35"/><path d="M9 11l8-10" stroke="#d5b03c" stroke-width="1.500"/></svg></button>
    </div>
    <div class="tray">
      <svg viewBox="0 0 14 14"><path d="M11 3C7 0 3 3 6 6l3 2c3 3-2 6-6 3M3 5c4 4 7 0 9 4M8 1L6 13" fill="none" stroke="#fff" stroke-width="1.700"/></svg>
      <svg viewBox="0 0 14 14"><circle cx="7" cy="7" r="6" fill="#c8cbc8"/><path d="M9.500 5a3 3 0 1 0 .5 3H7" fill="none" stroke="#566" stroke-width="1.500"/></svg>
      <svg viewBox="0 0 14 14"><path d="M7 0l6 2v5q-1 5-6 7-5-2-6-7V2z" fill="#fff"/><path d="M7 0v14M1 6h12" stroke="#345"/><path d="M10 6l4 8H6z" fill="#f4b719"/></svg>
      <svg viewBox="0 0 14 14"><path d="M1 1.500h12v9H1zM7 11v2M4 13h6" fill="none" stroke="#fff"/><circle cx="7" cy="6" r="2" fill="none" stroke="#fff"/></svg>
      <svg viewBox="0 0 14 14"><path d="M1 4h10v6H1z" fill="#fff" stroke="#fff"/><path d="M8 5h2v4H8z" fill="#1a2a3c"/><path d="M13 5v4" stroke="#fff"/></svg>
      <svg viewBox="0 0 14 14"><path d="M1 5h2l3-3v10L3 9H1zM9 5l4 4M13 5L9 9" fill="none" stroke="#fff"/></svg>
      <div class="clock"><span>7:49 AM</span><span>10/3/2020</span></div>
      <button class="note" aria-label="Notifications"><svg viewBox="0 0 16 16"><path d="M1.500 1.500h13v11H11L8 15l-1-2.500H1.500z" fill="none" stroke="#fff" stroke-width="1.200"/></svg></button>
    </div>
  </footer>
</div>

<div class="vmbar">
  <svg class="s14" viewBox="0 0 14 14"><path d="M8 1l5 4-2 1-2 3v3L3 7l3-1 2-3zM6 9l-4 4" fill="none" stroke="#555" stroke-width="1.200"/></svg>
  <svg class="s14 mon" viewBox="0 0 14 14"><path d="M0 1h14v9H0z" fill="#4fb326"/><path d="M2 2.500h10v6H2z" fill="#dff3d4"/><path d="M7 4l3 4H4z" fill="#4fb326"/><path d="M5 10h4v2h2v1H3v-1h2z" fill="#4fb326"/></svg>
  <button class="o1"><svg class="s12" viewBox="0 0 12 12"><path d="M1 2h11M1 6h11M1 10h11" stroke="#777"/></svg><span><u>O</u>ptions</span><i class="tri"></i></button>
  <button class="o2"><svg class="s12" viewBox="0 0 12 14"><path d="M6 2v11M2 5v3l4 2M10 4v3L6 9" fill="none" stroke="#222" stroke-width="1.300"/><path d="M6 0l2 3H4z"/><circle cx="6" cy="12" r="1.500"/></svg><span>Connect <u>U</u>SB Device</span><i class="tri"></i></button>
  <button class="o3"><svg class="s12" viewBox="0 0 12 12"><path d="M4 1h5v4H4zM0 7h4v4H0zM5 7h3v4H5zM9 7h3v4H9zM1 6h10" fill="#333" stroke="#333"/></svg><span>Send <u>C</u>trl-Alt-Delete</span></button>
  <span class="pool">Engineering Specialized Pool</span>
  <div class="vmwin"><button aria-label="Minimize session"><svg viewBox="0 0 14 14"><path d="M1 7h12"/></svg></button><button aria-label="Restore session"><svg viewBox="0 0 14 14"><path d="M1.500 4.500h8v8h-8zM4 4V1.500h8.500V10H10"/></svg></button><button aria-label="Close session"><svg viewBox="0 0 14 14"><path d="M2 2l10 10M12 2L2 12"/></svg></button></div>
</div>

<div class="dialog" role="dialog" aria-labelledby="dlg-title">
  <div class="dtitle"><svg class="s12"><use href="#app"/></svg><span id="dlg-title">Region Selection</span><button aria-label="Close dialog"><svg viewBox="0 0 10 10"><path d="M1.500 1.500l7 7M8.500 1.500l-7 7" stroke="#222"/></svg></button></div>
  <fieldset>
    <legend>Eligible Sets</legend>
    <p>Sets below may contain elements, cells, shell faces,<br>or wire edges.</p>
    <div class="filter"><label for="nf">Name filter:</label><input id="nf" type="text"><svg class="s14"><use href="#bulb"/></svg></div>
    <div class="setlist"><table><thead><tr><th>Name</th><th>Type</th></tr></thead><tbody><tr><td>OHT</td><td>Geometry</td></tr></tbody></table></div>
    <label class="check"><input type="checkbox" checked>Highlight selections in viewport</label>
  </fieldset>
  <div class="actions"><button class="btn focus">Continue...</button><button class="btn">Dismiss</button></div>
</div>
<svg class="cursor" viewBox="0 0 10 14" aria-hidden="true"><path d="M1 1v10l2.500-2 2 4 1.500-1-2-4h3.500z" fill="#fff" stroke="#333" stroke-width=".8"/></svg>
</body>
</html>
```
FILE: styles.css
```css
* { box-sizing: border-box; }
html, body { height: 100%; }
body {
  margin: 0;
  overflow: hidden;
  font-family: Roboto, "Open Sans", sans-serif;
  font-size: 10px;
  line-height: 16px;
  color: #111;
  background: #f2f2f2;
}
button { font: inherit; color: inherit; background: none; border: 0; padding: 0; margin: 0; display: flex; align-items: center; justify-content: center; white-space: pre; }
select, input { font: inherit; color: inherit; }
svg { display: block; flex: none; }
ul { list-style: none; margin: 0; padding: 0; }
.defs { position: absolute; width: 0; height: 0; }
.s12 { width: 12px; height: 12px; }
.s14 { width: 14px; height: 14px; }
.s16 { width: 14px; height: 14px; }
.red { fill: #c01818; }
.t6 { font: bold 6px "Liberation Sans", sans-serif; }
.t7 { font: bold 7px "Liberation Sans", sans-serif; }
.t8 { font: bold 8px "Liberation Sans", sans-serif; }
.t12 { font: italic bold 12px "Liberation Serif", serif; }
.t15 { font: bold 15px "Liberation Serif", serif; }

.desktop { display: flex; flex-direction: column; height: 100vh; }

.title { display: flex; align-items: center; height: 19px; flex: none; padding-left: 2px; gap: 2px; background: #fff; color: #8a8a8a; }
.winbtns { display: flex; margin-left: auto; }
.winbtns button { width: 38px; height: 19px; }
.winbtns svg { width: 9px; height: 9px; fill: none; stroke: #888; }

.menu { display: flex; align-items: center; height: 21px; flex: none; padding-left: 4px; background: linear-gradient(90deg, #fff 55%, #f2f2f2 80%); }
.menulogo { margin-right: 2px; }
.menu button { padding: 0 6px 0 7px; }
.menu .ctxhelp { padding-left: 9px; font-weight: bold; }
.mdibtns { display: flex; margin-left: auto; }
.menu .mdibtns button { width: 17px; padding: 0; }
.mdibtns svg { width: 10px; height: 10px; fill: none; stroke: #555; stroke-width: 1.5; }

.bar { display: flex; height: 24px; flex: none; background: linear-gradient(90deg, #fff 40%, #f2f2f2 75%); }
.bar.second { padding-left: 297px; }
.grp { display: flex; flex: none; align-items: center; border: 1px solid #d0d0d0; border-left: 0; background: #fafafa; height: 24px; }
.grp > button { flex: 1 1 0; min-width: 0; height: 22px; }
.grp button svg { width: 18px; height: 18px; }
.grip { flex: none; width: 7px; height: 16px; background: radial-gradient(circle, #999 1px, transparent 1px) 1px 0 / 5px 4px repeat-y; }
.sep { flex: none; width: 3px; height: 18px; border-left: 1px solid #bbb; }
.g51 { width: 51px; }
.g73 { width: 73px; }
.g132 { width: 132px; }
.g137 { width: 137px; }
.g163 { width: 163px; }
.g181 { width: 181px; }
.g267 { width: 267px; }
.far-a { margin-left: 95px; width: 225px; }
.far-b { margin-left: 21px; width: 29px; }
.far-c { margin-left: 12px; width: 51px; }
.dim { color: #999; }
.gold { color: #8d7327; }
.num { font: bold 14px "Liberation Sans", sans-serif; color: #c01818; }
.tri { width: 0; border: 3px solid transparent; border-top: 4px solid #111; border-bottom: 0; }
.grp .tri { margin: 0 4px 0 2px; }

.combo { display: flex; align-items: center; height: 18px; border: 1px solid #999; background: #fff; }
.combo select { appearance: none; flex: 1; min-width: 0; border: 0; padding: 0 3px; background: transparent; height: 16px; line-height: 16px; outline: 0; }
.drop { width: 9px; height: 16px; background: #e6e6e6; border-left: 1px solid #aaa; }
.spn { width: 9px; height: 16px; background: #f2f2f2; color: #333; }
.grey { color: #999; background: none; }
.combo.all { width: 90px; flex: none; height: 21px; background: #acc9ec; border-color: #c5d3e3; }
.all .drop { background: #bccde0; border: 0; }
.combo.defaults { width: 100px; height: 20px; flex: none; }

.work { display: flex; flex: 1; min-height: 0; }
.side { display: flex; flex-direction: column; width: 268px; padding: 5px 2px 2px 2px; background: #fff; flex: none; border-left: 1px solid #ddd; }
.tabs { display: flex; height: 19px; }
.tabs button { padding: 0 7px; border: 1px solid #ddd; border-left: 0; background: #f0f0f0; }
.tabs .on { background: #fff; border-bottom-color: #fff; }
.dbrow { display: flex; align-items: center; gap: 7px; padding: 5px 0 4px 1px; }
.combo.db { flex: 1; min-width: 0; }
.dbi { width: 14px; height: 13px; margin-left: 2px; }
.treebox { display: flex; flex: 1; min-height: 0; margin-left: 1px; border: 1px solid #aaa; overflow: hidden; }
.tree { display: flex; flex-direction: column; justify-content: space-between; flex: 1; min-width: 0; }
.upper { margin-top: -2px; }
.tree li { display: flex; align-items: center; height: 16px; white-space: nowrap; }
.ti { width: 14px; height: 14px; margin-right: 4px; }
.blk { color: #444; }
.redi { color: #c33; }
.ex { width: 8px; height: 8px; margin-right: 4px; }
.ex.r { margin-left: 2px; margin-right: 2px; }
.v { align-self: stretch; border-left: 1px dotted #999; margin-left: 6px; }
.v.a { width: 23px; }
.v.c { width: 5px; }
.v.b { width: 5px; margin-left: 20px; }
.tee { align-self: stretch; width: 8px; margin: 0 0 0 4px; border-left: 1px dotted #999; background: repeating-linear-gradient(90deg, #aaa 0 1px, transparent 1px 2px) 0 8px / 7px 1px no-repeat; }
.scroll { display: flex; flex-direction: column; align-items: center; justify-content: space-between; flex: none; width: 13px; padding: 3px 0; background: #f0f0f0; }
.scroll svg { width: 10px; height: 10px; }
.flip { transform: rotate(180deg); }
.thumb { width: 11px; flex: 1; margin: 120px 0 4px; background: #cdcdcd; }
.thumb.small { flex: none; height: 41px; margin: auto 0 3px; }

.right { display: flex; flex-direction: column; flex: 1; min-width: 0; padding-left: 4px; background: #f2f2f2; }
.context { display: flex; align-items: center; height: 25px; flex: none; padding-left: 5px; background: linear-gradient(#fbfbfb, #f0f0f0); }
.context .combo { margin: 0 12px 0 4px; height: 19px; }
.m1 { width: 88px; }
.m2 { width: 73px; }
.m3 { width: 111px; }
.canvasrow { display: flex; flex: 1; min-height: 0; }
.toolbox { display: flex; flex-direction: column; justify-content: space-between; width: 51px; flex: none; background: #f5f5f5; }
.tools { display: grid; grid-template-columns: 24px 24px; grid-auto-rows: 23px; place-items: center; padding: 0 1px; }
.tools.top { grid-template-rows: 30px; }
.tools svg { width: 20px; height: 20px; }
.tools .f { width: 18px; height: 18px; }
.low { border-bottom: 1px solid #bbb; }
.datum { padding: 5px 1px 9px; }
.viewport { flex: 1; min-width: 0; background: linear-gradient(#1c2b46 0%, #202f4b 20%, #2b3c58 52%, #4f617f 67%, #7a8ba9 84%, #9fafca 100%); }
.viewport svg { width: 100%; height: 100%; }
.datumtxt { font: bold 10px "Liberation Mono", monospace; fill: #d8e92b; }
.triadtxt { font: bold 11px "Liberation Sans", sans-serif; fill: #fff; }
.prompt { display: flex; align-items: center; height: 29px; flex: none; padding-left: 5px; gap: 3px; background: linear-gradient(#fff, #f0f0f0); }
.pbtn { width: 15px; height: 17px; background: #c9c9c9; }
.pbtn svg { width: 12px; height: 12px; fill: none; stroke: #909090; }
.prompt span { margin-left: 3px; }
.btn { height: 18px; border: 1px solid #adadad; background: #e3e3e3; }
.btn.selvp { margin-left: auto; padding: 0 2px; }
.ds { width: 18px; height: 20px; margin-left: 18px; }
.prompt .simulia { font: italic bold 13px "DejaVu Sans", sans-serif; color: #149a82; margin: 3px 2px 0 1px; }

.messages { display: flex; height: 119px; flex: none; padding: 3px 0 3px 2px; background: #f5f5f5; }
.mtabs { width: 32px; padding: 6px 0; display: flex; flex-direction: column; gap: 6px; }
.mtabs button { height: 24px; }
.mtabs svg { width: 20px; height: 20px; }
.log { display: flex; flex: 1; min-width: 0; border: 1px solid #aaa; background: #fff; }
.log pre { flex: 1; margin: 0; padding: 2px; font: 11px/11px "Liberation Mono", monospace; color: #222; }
.resize { width: 14px; height: 12px; align-self: flex-end; }

.taskbar { display: flex; height: 33px; flex: none; background: linear-gradient(90deg, #1c2e36, #1e363d 50%, #16233d 75%, #18253d); color: #fff; }
.start { width: 40px; }
.start svg { width: 17px; height: 17px; }
.search { display: flex; align-items: center; width: 286px; background: #f2f2f2; padding-left: 10px; gap: 10px; }
.search svg { width: 17px; height: 18px; fill: none; stroke: #222; stroke-width: 1.300; }
.search input { flex: 1; min-width: 0; border: 0; background: none; padding: 0; font-size: 12px; outline: 0; }
.search input::placeholder { color: #444; opacity: 1; }
.apps { display: flex; margin-left: 1px; }
.apps button { width: 41px; background: linear-gradient(#76b9ed, #76b9ed) 50% 100% / 0 2px no-repeat; }
.apps svg { width: 18px; height: 18px; }
.apps .run { background-size: 34px 2px; }
.apps .active { background-color: #4a5d68; background-size: 41px 2px; }
.tray { display: flex; align-items: center; margin-left: auto; gap: 6px; padding-right: 2px; border-right: 1px solid #667; margin-right: 2px; }
.tray svg { width: 14px; height: 14px; }
.clock { display: flex; flex-direction: column; align-items: center; width: 52px; }
.note { width: 42px; height: 33px; margin-left: -6px; }

.vmbar { position: absolute; left: 307px; top: 0; width: 665px; height: 27px; display: flex; align-items: center; background: #e8e8e8; padding-left: 9px; color: #222; }
.mon { margin-left: 12px; }
.vmbar button { gap: 3px; }
.vmbar .tri { margin-left: 5px; }
.o1 { margin-left: 18px; }
.vmbar .o2 { margin-left: 9px; }
.vmbar .o3 { margin-left: 9px; }
.pool { margin-left: auto; margin-right: 14px; }
.vmwin { display: flex; margin-right: 13px; gap: 14px; padding-bottom: 6px; }
.vmwin svg { width: 14px; height: 14px; fill: none; stroke: #333; }

.dialog { position: absolute; left: 9px; top: 226px; width: 345px; height: 237px; padding: 0 4px; background: #f6f6f6; border: 1px solid #d5d5d5; display: flex; flex-direction: column; }
.dtitle { display: flex; align-items: center; gap: 2px; height: 26px; margin: 0 -4px; padding: 0 9px 0 6px; background: #fff; }
.dtitle button { margin-left: auto; }
.dtitle button svg { width: 9px; height: 9px; }
fieldset { margin: 3px 0 0; padding: 0 4px 4px 3px; border: 1px solid #ddd; min-width: 0; }
legend { padding: 0 3px; }
fieldset p { margin: 4px 0; line-height: 13px; }
.filter { display: flex; align-items: center; gap: 4px; }
.filter input { width: 82px; height: 19px; border: 1px solid #aaa; background: #fff; }
.filter svg { margin-left: 3px; }
.setlist { height: 80px; margin: 4px 0; border: 1px solid #aaa; background: #fff; }
table { width: 100%; border-collapse: collapse; }
th, td { text-align: left; padding: 0 3px; line-height: 16px; height: 17px; }
th:first-child { width: 208px; }
td { background: #0b78d4; color: #fff; }
.check { display: flex; align-items: center; gap: 4px; }
.check input { appearance: none; width: 12px; height: 12px; margin: 0; border: 1px solid #333; background: #fff; display: grid; place-items: center; }
.check input:checked::before { content: ""; width: 8px; height: 4px; border-left: 1px solid #222; border-bottom: 1px solid #222; transform: rotate(-45deg) translate(0, -1px); }
.actions { display: flex; justify-content: space-between; padding: 7px 52px 0 49px; }
.actions .btn { width: 64px; }
.btn.focus { border-color: #2478c8; background: #e3eef9; }
.cursor { position: absolute; left: 108px; top: 447px; width: 10px; height: 14px; }
```
